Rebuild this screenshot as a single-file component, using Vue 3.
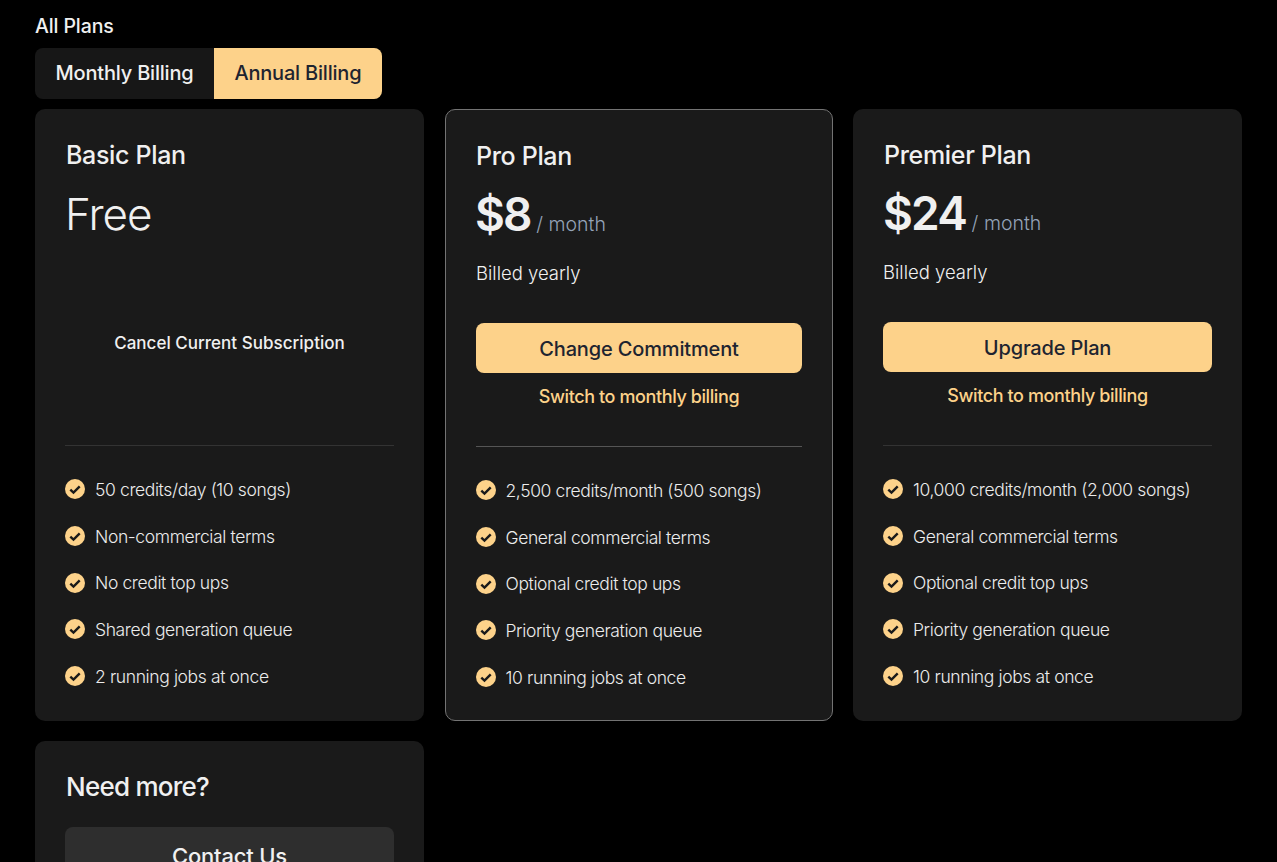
<script setup>
const plans = [
  { name: 'Basic Plan', free: true, action: null, features: ['50 credits/day (10 songs)', 'Non-commercial terms', 'No credit top ups', 'Shared generation queue', '2 running jobs at once'] },
  { name: 'Pro Plan', price: '$8', current: true, action: 'Change Commitment', features: ['2,500 credits/month (500 songs)', 'General commercial terms', 'Optional credit top ups', 'Priority generation queue', '10 running jobs at once'] },
  { name: 'Premier Plan', price: '$24', action: 'Upgrade Plan', features: ['10,000 credits/month (2,000 songs)', 'General commercial terms', 'Optional credit top ups', 'Priority generation queue', '10 running jobs at once'] },
]
</script>

<template>
  <main class="page">
    <h1 class="heading">All Plans</h1>
    <div class="toggle">
      <button class="tab">Monthly Billing</button>
      <button class="tab tab-active">Annual Billing</button>
    </div>
    <section class="grid">
      <article v-for="plan in plans" :key="plan.name" class="card" :class="{ current: plan.current }">
        <h2 class="name">{{ plan.name }}</h2>
        <div class="pricing">
          <div v-if="plan.free" class="free">Free</div>
          <template v-else>
            <div class="price"><span class="amount">{{ plan.price }}</span><span class="per">/ month</span></div>
            <div class="billed">Billed yearly</div>
          </template>
        </div>
        <div class="actions">
          <template v-if="plan.action">
            <button class="cta">{{ plan.action }}</button>
            <a class="switch">Switch to monthly billing</a>
          </template>
          <a v-else class="cancel">Cancel Current Subscription</a>
        </div>
        <ul class="features">
          <li v-for="f in plan.features" :key="f" class="feature">
            <svg class="check" viewBox="0 0 20 20" width="20" height="20" aria-hidden="true">
              <circle cx="10" cy="10" r="10" fill="#fdd28a" />
              <path d="M5.3 10.6l3.2 3 6.2-6.2" fill="none" stroke="#1a1a1a" stroke-width="2.4" />
            </svg>
            <span>{{ f }}</span>
          </li>
        </ul>
      </article>
      <article class="card more">
        <h2 class="need">Need more?</h2>
        <button class="contact">Contact Us</button>
      </article>
    </section>
  </main>
</template>

<style>
html, body { margin: 0; background: #000; overflow: hidden; }
</style>

<style scoped>
.page {
  box-sizing: border-box;
  height: 862px;
  overflow: hidden;
  padding: 14px 35px 0;
  background: #000;
  color: #f0f0f0;
  font-family: Inter, "Liberation Sans", sans-serif;
}
.heading { margin: 0; font-size: 19.5px; line-height: 24px; font-weight: 550; letter-spacing: -0.1px; }
.toggle { display: inline-flex; margin-top: 10px; border-radius: 8px; background: #171717; vertical-align: top; }
.tab {
  height: 51px; padding: 0 20.5px 2px; border: 0; background: transparent; color: #f0f0f0;
  font: 550 20px/24px Inter, sans-serif; letter-spacing: -0.2px; border-radius: 8px 0 0 8px;
}
.tab-active { background: #fdd28a; color: #1e2430; border-radius: 0 8px 8px 0; }
.grid { display: grid; grid-template-columns: repeat(3, 1fr); gap: 20px; margin-top: 10px; }
.card { box-sizing: border-box; background: #1a1a1a; border-radius: 10px; padding: 30px 30px 20px; display: flex; flex-direction: column; min-width: 0; }
.current { border: 1px solid #737373; margin-left: 1px; }
.name { margin: 0; font-size: 25px; line-height: 32px; font-weight: 550; letter-spacing: -0.33px; padding-left: 1px; }
.current .name { padding-left: 0; }
.pricing { height: 96px; margin-top: 17px; }
.free { padding-top: 1px; font-size: 44px; line-height: 50px; font-weight: 300; letter-spacing: -1px; }
.price { display: flex; align-items: baseline; height: 50px; line-height: 50px; }
.current .price { margin-left: -1px; }
.amount { font-size: 46px; font-weight: 600; letter-spacing: -1.8px; }
.per { margin-left: 5.5px; font-size: 19.5px; font-weight: 300; color: #94a3b8; }
.billed { margin-top: 22px; font-size: 18.5px; line-height: 24px; font-weight: 300; }
.actions { height: 123px; margin-top: 38px; display: flex; flex-direction: column; align-items: center; }
.cta { width: 100%; height: 50px; flex: none; border: 0; border-radius: 8px; background: #fdd28a; color: #1e2430; font: 550 20px/24px Inter, sans-serif; letter-spacing: -0.15px; padding: 2px 0 0; }
.switch { margin-top: 12px; color: #fdd28a; font-size: 18px; line-height: 24px; font-weight: 550; letter-spacing: -0.4px; }
.cancel { margin-top: 9px; font-size: 17px; line-height: 24px; font-weight: 550; letter-spacing: 0.02px; }
.features { list-style: none; margin: 0; padding: 20px 0 0; border-top: 1px solid #333; }
.current .features { border-top-color: #555; }
.feature { display: flex; align-items: center; gap: 10px; height: 46.7px; font-size: 17.5px; font-weight: 300; letter-spacing: -0.38px; color: #ececec; }
.current .feature { gap: 9.5px; }
.feature .check { flex: none; }
.need { margin: 0; font-size: 26px; line-height: 32px; font-weight: 550; letter-spacing: -0.75px; padding-left: 1px; }
.contact { margin-top: 24px; height: 57px; border: 0; border-radius: 8px; background: #2e2e2e; color: #f0f0f0; font: 550 22px/24px Inter, sans-serif; letter-spacing: -0.2px; padding: 0; }
</style>
